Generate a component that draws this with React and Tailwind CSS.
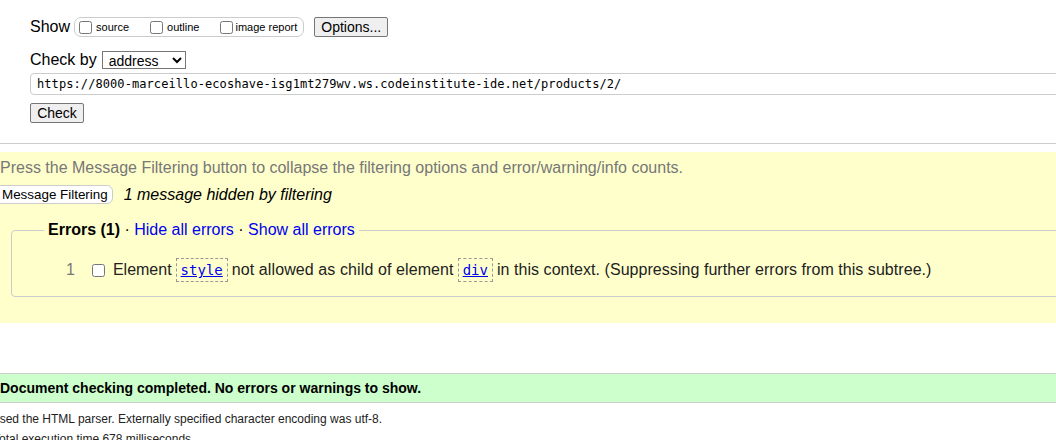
import { useState } from 'react';

const sans = "font-['Liberation_Sans',Arial,sans-serif]";
const mono = "font-['DejaVu_Sans_Mono','Liberation_Mono',monospace]";

function ShowOptions() {
  return (
    <fieldset className="ml-[4px] flex h-[20px] items-center gap-[0px] rounded-[7px] border border-[#ccc] pl-[4px] pr-[6px]">
      <label className="flex items-center text-[11px]">
        <input type="checkbox" className="m-0 mr-[4px] h-[13px] w-[13px]" />
        source
      </label>
      <label className="ml-[21px] flex items-center text-[11px]">
        <input type="checkbox" className="m-0 mr-[4px] h-[13px] w-[13px]" />
        outline
      </label>
      <label className="ml-[21px] flex items-center text-[11px]">
        <input type="checkbox" className="m-0 mr-[2px] h-[13px] w-[13px]" />
        image report
      </label>
    </fieldset>
  );
}

function Code({ children }) {
  return (
    <span className="mx-[4px] inline-block border border-dashed border-[#999] px-[4px] leading-[22px]">
      <a href="#" className={`${mono} text-[14px] text-[#00e] underline`}>{children}</a>
    </span>
  );
}

export default function App() {
  const [by, setBy] = useState('address');

  return (
    <div className={`${sans} h-[440px] w-full overflow-hidden bg-white text-black`}>
      {/* check form */}
      <div className="pl-[30px] pt-[17px]">
        <div className="flex h-[20px] items-center">
          <span className="text-[16px]">Show</span>
          <ShowOptions />
          <button className="ml-[10px] h-[20px] rounded-[2px] border border-[#767676] bg-[#efefef] px-[6px] text-[14px] leading-none">
            Options...
          </button>
        </div>
        <div className="mt-[14px] flex h-[18px] items-center">
          <span className="text-[16px]">Check by</span>
          <select
            value={by}
            onChange={e => setBy(e.target.value)}
            className="ml-[5px] h-[18px] w-[84px] border border-[#767676] bg-white px-[2px] text-[14px] leading-none"
          >
            <option value="address">address</option>
            <option value="upload">file upload</option>
            <option value="text">text input</option>
          </select>
        </div>
        <input
          readOnly
          value="https://8000-marceillo-ecoshave-isg1mt279wv.ws.codeinstitute-ide.net/products/2/"
          className={`${mono} mt-[4px] block h-[22px] w-[1100px] rounded-[4px] border border-[#ccc] px-[6px] text-[12px] tracking-[0.08px]`}
        />
        <button className="mt-[8px] block h-[20px] w-[54px] rounded-[2px] border border-[#767676] bg-[#efefef] text-[14px] leading-none">
          Check
        </button>
      </div>

      <div className="mt-[20px] border-t border-[#ccc]" />

      {/* results */}
      <div className="mt-[8px] h-[171px] bg-[#ffffcc] pt-[7px]">
        <p className="text-[16px] leading-[18px] text-[#777]">
          Press the Message Filtering button to collapse the filtering options and error/warning/info counts.
        </p>
        <div className="mt-[8px] flex h-[19px] items-center">
          <button className="-ml-[4px] h-[19px] rounded-r-[6px] border border-[#ccc] bg-white pl-[5px] pr-[4px] text-[13.4px] leading-none">
            Message Filtering
          </button>
          <span className="ml-[11px] text-[16px] italic">1 message hidden by filtering</span>
        </div>
        <fieldset className="ml-[11px] mt-[17px] h-[76px] w-[1100px] rounded-[4px] border border-[#ccc]">
          <legend className="ml-[32px] px-[4px] text-[16px] leading-[18px]">
            <b>Errors (1)</b> · <a href="#" className="text-[#00e]">Hide all errors</a> · <a href="#" className="text-[#00e]">Show all errors</a>
          </legend>
          <div className="mt-[19px] flex items-center text-[16px] text-[#222]">
            <span className="ml-[54px] text-[#777]">1</span>
            <input type="checkbox" className="m-0 ml-[17px] h-[13px] w-[13px]" />
            <span className="ml-[8px]">Element</span>
            <Code>style</Code>
            <span className="tracking-[0.1px]">not allowed as child of element</span>
            <Code>div</Code>
            <span className="tracking-[0.05px]">in this context. (Suppressing further errors from this subtree.)</span>
          </div>
        </fieldset>
      </div>

      <div className="mt-[50px] flex h-[30px] items-center border-y border-[#ccc] bg-[#ccffcc] text-[14px] font-bold">
        Document checking completed. No errors or warnings to show.
      </div>
      <p className="-ml-[9px] mt-[6px] text-[12px] leading-[20px] text-[#222]">
        Used the HTML parser. Externally specified character encoding was utf-8.
      </p>
      <p className="-ml-[7px] text-[12px] leading-[20px] text-[#222]">Total execution time 678 milliseconds.</p>
    </div>
  );
}
